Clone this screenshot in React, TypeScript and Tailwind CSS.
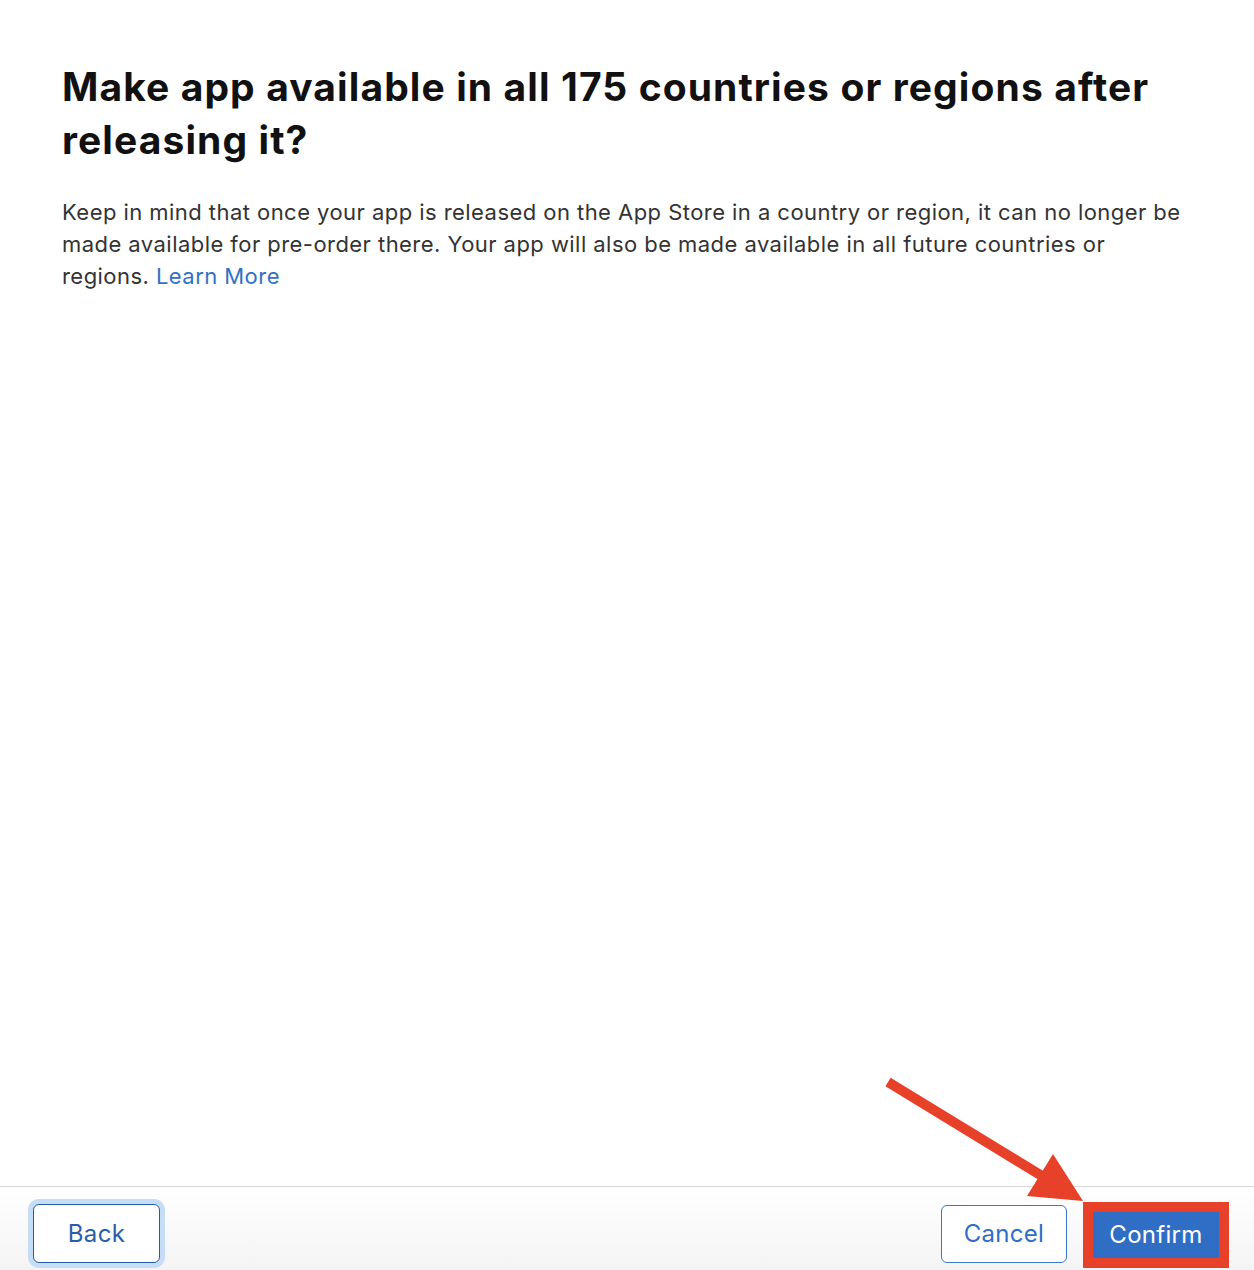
const Arrow = () => (
  <svg
    className="absolute top-0 left-0 pointer-events-none"
    width="1254"
    height="1270"
    viewBox="0 0 1254 1270"
  >
    <line x1="888" y1="1082" x2="1042" y2="1176" stroke="#e8412a" strokeWidth="10" />
    <polygon points="1053,1154 1027,1196 1083,1201" fill="#e8412a" />
  </svg>
);

export default function App() {
  return (
    <div
      className="relative flex flex-col w-[1254px] h-[1270px] bg-white overflow-hidden"
      style={{ fontFamily: "Inter, 'Noto Sans', sans-serif" }}
    >
      {/* content */}
      <div className="flex-1 pl-[62px]">
        <h1 className="pt-[60px] w-[1130px] text-[39px] leading-[53px] font-bold text-[#111] tracking-[1.1px]">
          Make app available in all 175 countries or regions after releasing it?
        </h1>
        <p className="mt-[30px] w-[1126px] text-[22px] leading-[32px] text-[#333] tracking-[0.45px]">
          Keep in mind that once your app is released on the App Store in a country or region, it can no longer be
          made available for pre-order there. Your app will also be made available in all future countries or
          regions. <span className="text-[#2f72c4]">Learn More</span>
        </p>
      </div>

      {/* footer */}
      <div className="h-[84px] border-t border-[#d9d9d9] bg-gradient-to-b from-white to-[#f4f4f4] flex items-start pt-[17px] pl-[33px] pr-[25px]">
        <button className="w-[127px] h-[59px] rounded-[6px] border border-[#2a5da8] bg-white text-[24px] text-[#2a5da8] tracking-[0.3px] ring-[5px] ring-[#c6ddf7]">
          Back
        </button>
        <div className="flex-1" />
        <button className="mt-[1px] w-[126px] h-[58px] rounded-[6px] border border-[#3a77c9] bg-white text-[24px] text-[#2f6ec4] tracking-[0.3px]">
          Cancel
        </button>
        <div className="ml-[16px] -mt-[2px] border-[10px] border-[#e8412a]">
          <div className="w-[126px] h-[46px] bg-[#2f6ec4] flex items-center justify-center text-[24px] text-white tracking-[0.3px]">
            Confirm
          </div>
        </div>
      </div>

      <Arrow />
    </div>
  );
}
